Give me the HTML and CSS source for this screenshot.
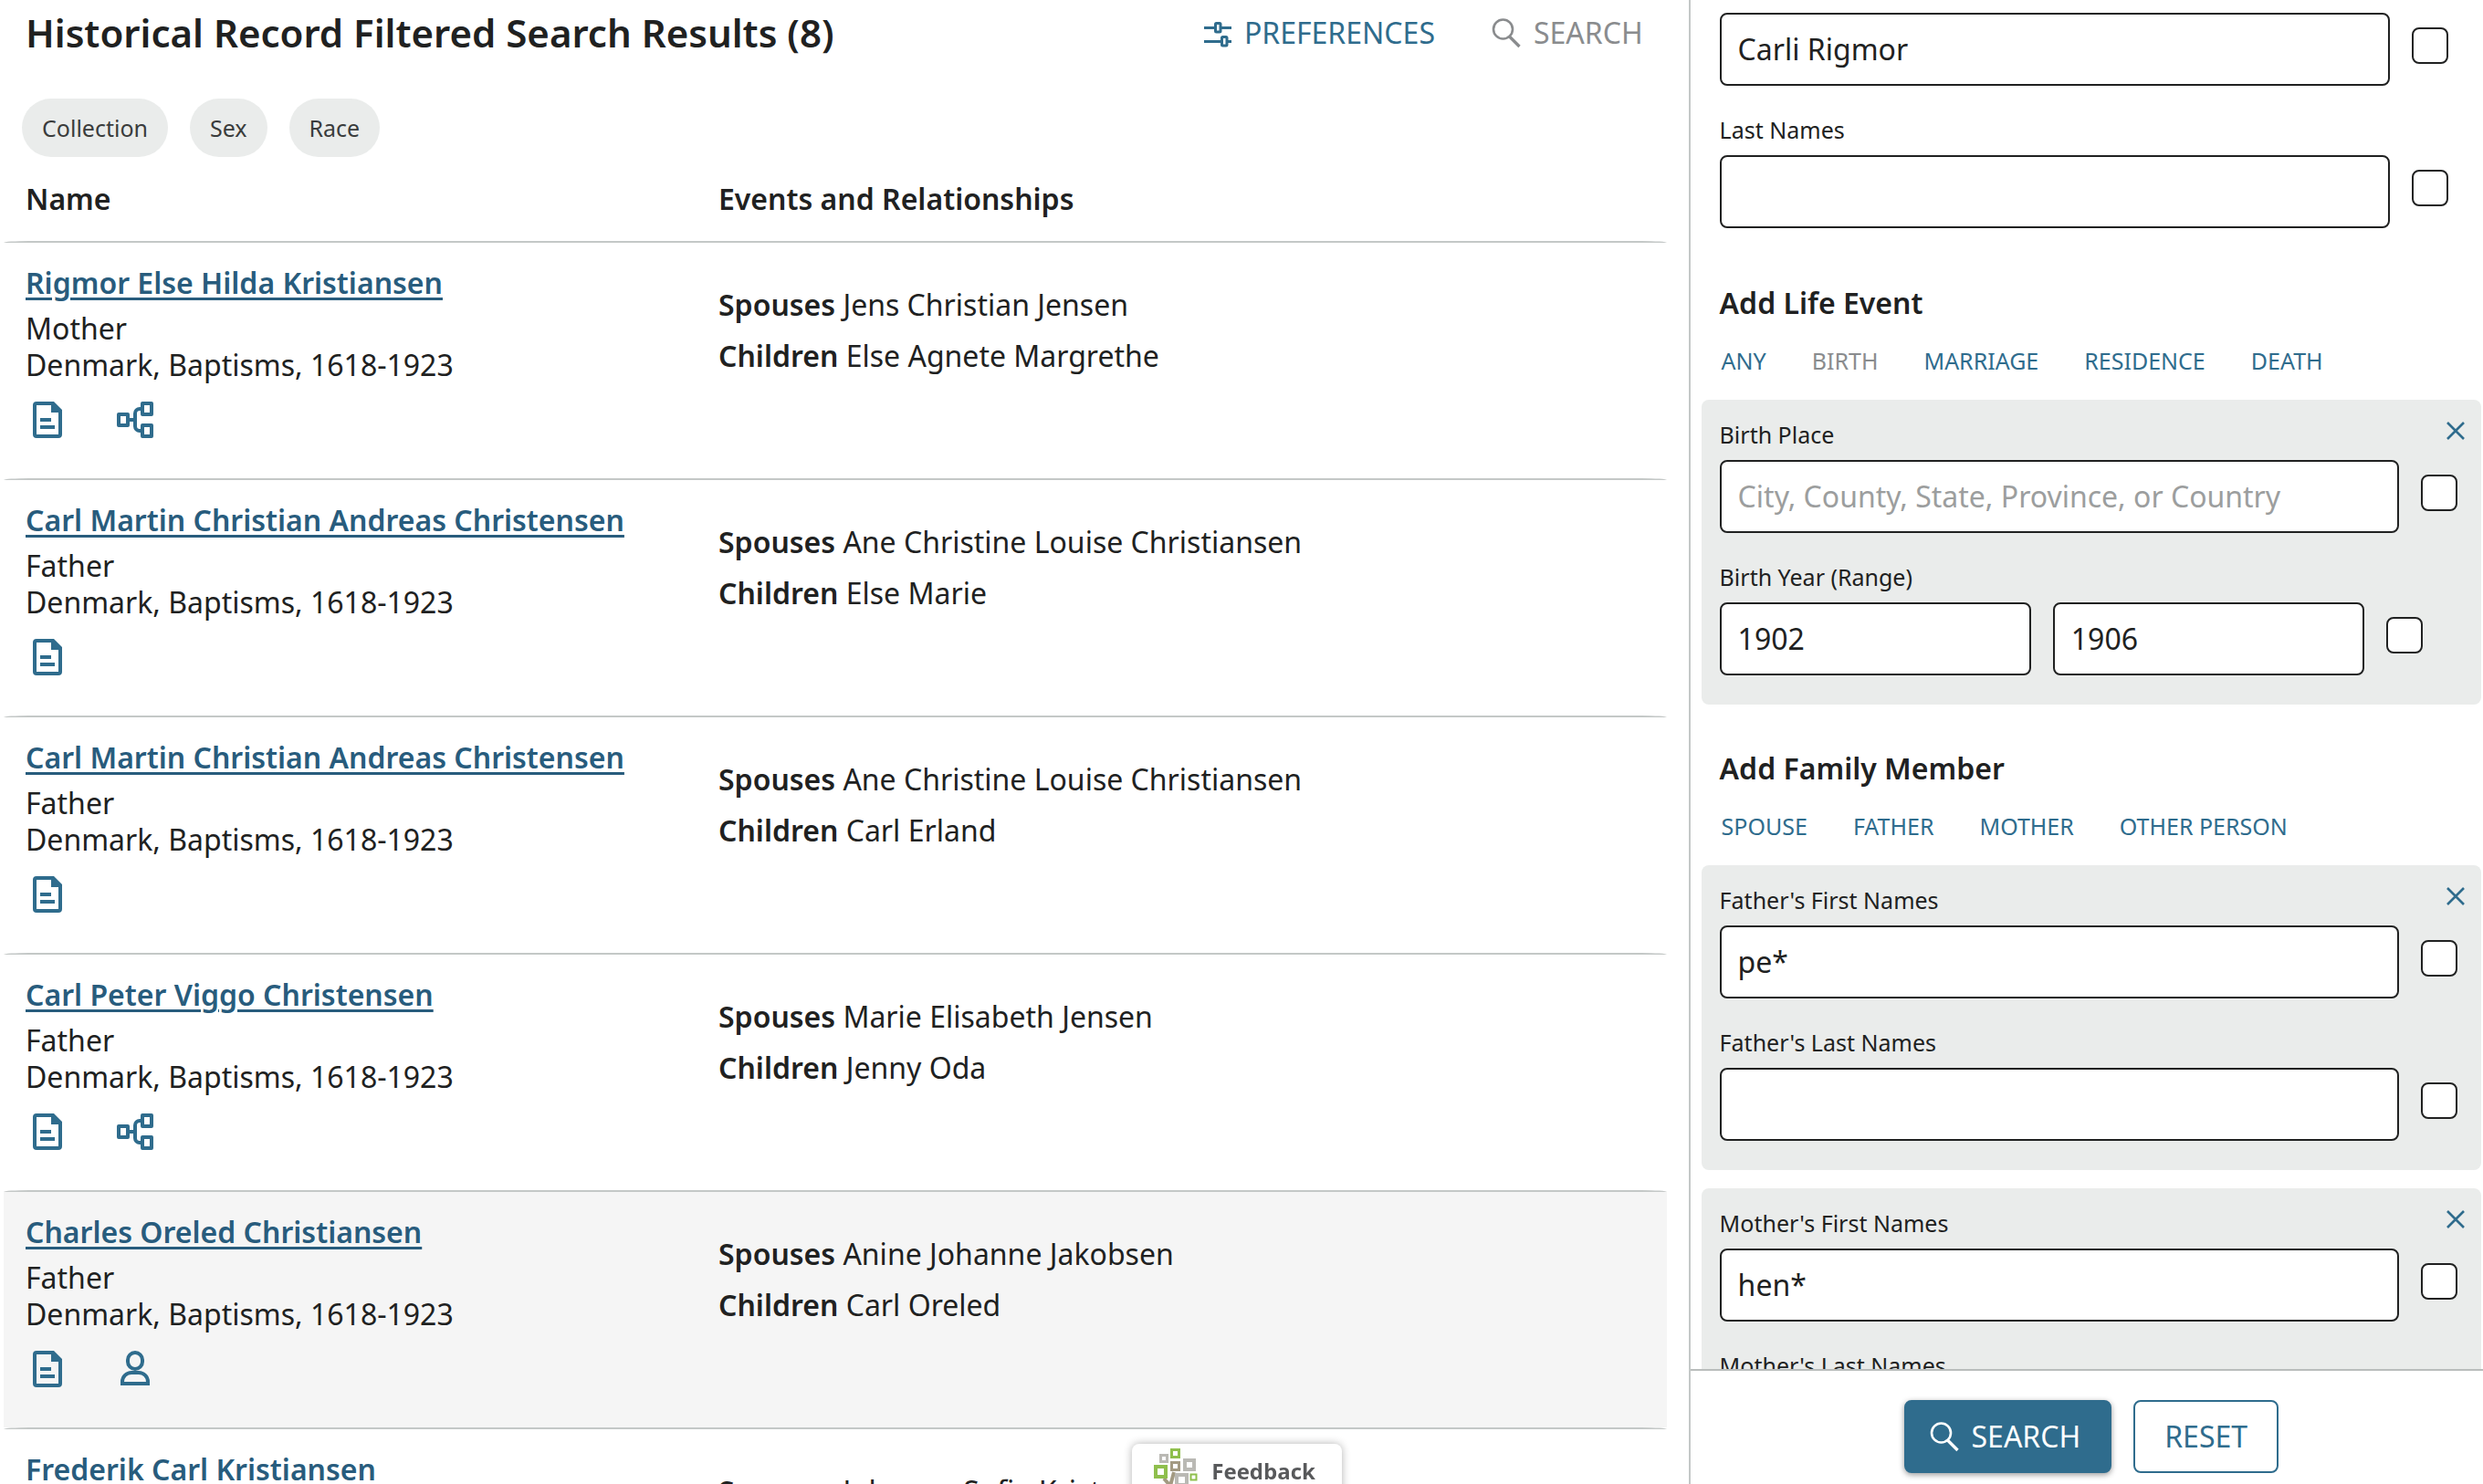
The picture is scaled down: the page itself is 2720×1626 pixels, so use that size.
FILE: index.html
```
<!DOCTYPE html>
<html lang="en">
<head>
  <meta charset="UTF-8">
  <title>Historical Record Search Results</title>
  <meta name="viewport" content="width=device-width, initial-scale=1.0">
  <link rel="stylesheet" href="styles.css">
</head>
<body>

  <!-- shared icons -->
  <svg class="sprite" aria-hidden="true">
    <symbol id="icon-search" viewBox="0 0 32 36">
      <circle cx="12.5" cy="14" r="10.5" fill="none" stroke="currentColor" stroke-width="2.6"/>
      <path d="M19.5 22 L30.5 33" fill="none" stroke="currentColor" stroke-width="3.4"/>
    </symbol>
    <symbol id="icon-doc" viewBox="0 0 32 40">
      <path d="M4 0 H23 L32 9 V36 a4 4 0 0 1 -4 4 H4 a4 4 0 0 1 -4 -4 V4 a4 4 0 0 1 4 -4z M4 4 V36 H28 V12 H20 V4z" fill="currentColor" fill-rule="evenodd"/>
      <path d="M8 20 H20 M8 28 H24" stroke="currentColor" stroke-width="4"/>
    </symbol>
    <symbol id="icon-tree" viewBox="0 0 40 40">
      <g fill="none" stroke="currentColor" stroke-width="4" stroke-linejoin="round">
        <rect x="2" y="14" width="10" height="12"/>
        <rect x="28" y="2" width="10" height="12"/>
        <rect x="28" y="26" width="10" height="12"/>
        <path d="M13 20 H20 M27 8 H25 a5 5 0 0 0 -5 5 V27 a5 5 0 0 0 5 5 H27"/>
      </g>
    </symbol>
    <symbol id="icon-person" viewBox="0 0 32 40">
      <g fill="none" stroke="currentColor" stroke-width="4">
        <rect x="8" y="2" width="16" height="18" rx="8"/>
        <path d="M2 36 V34 a10 10 0 0 1 10 -10 H20 a10 10 0 0 1 10 10 V36z"/>
      </g>
    </symbol>
    <symbol id="icon-close" viewBox="0 0 20 20">
      <path d="M1 1 L19 19 M19 1 L1 19" stroke="currentColor" stroke-width="2.6"/>
    </symbol>
  </svg>

  <div class="app">
    <main class="results">
      <header class="results-header">
        <h1>Historical Record Filtered Search Results (8)</h1>
        <div class="actions">
          <button class="action" type="button">
            <svg class="icon-sliders" viewBox="0 0 30 32" fill="none" stroke="currentColor" stroke-width="3">
              <path d="M0 10.5 H11 M19 10.5 H30 M0 25.5 H18 M26 25.5 H30"/>
              <rect x="12.500" y="5.500" width="5.500" height="9.500" rx="1"/>
              <rect x="19.500" y="20.500" width="5.500" height="9.500" rx="1"/>
            </svg>
            PREFERENCES
          </button>
          <button class="action" type="button" disabled>
            <svg class="icon-search"><use href="#icon-search"/></svg>
            SEARCH
          </button>
        </div>
      </header>

      <div class="chips">
        <button class="chip" type="button">Collection</button>
        <button class="chip" type="button">Sex</button>
        <button class="chip" type="button">Race</button>
      </div>

      <table class="records">
        <thead>
          <tr>
            <th class="col-name">Name</th>
            <th>Events and Relationships</th>
          </tr>
        </thead>
        <tbody>
          <tr>
            <td>
              <a class="name" href="#">Rigmor Else Hilda Kristiansen</a>
              <div class="detail">Mother</div>
              <div class="detail">Denmark, Baptisms, 1618-1923</div>
              <div class="icons">
                <svg class="icon"><use href="#icon-doc"/></svg>
                <svg class="icon"><use href="#icon-tree"/></svg>
              </div>
            </td>
            <td class="events">
              <div><b>Spouses</b> Jens Christian Jensen</div>
              <div><b>Children</b> Else Agnete Margrethe</div>
            </td>
          </tr>
          <tr>
            <td>
              <a class="name" href="#">Carl Martin Christian Andreas Christensen</a>
              <div class="detail">Father</div>
              <div class="detail">Denmark, Baptisms, 1618-1923</div>
              <div class="icons">
                <svg class="icon"><use href="#icon-doc"/></svg>
              </div>
            </td>
            <td class="events">
              <div><b>Spouses</b> Ane Christine Louise Christiansen</div>
              <div><b>Children</b> Else Marie</div>
            </td>
          </tr>
          <tr>
            <td>
              <a class="name" href="#">Carl Martin Christian Andreas Christensen</a>
              <div class="detail">Father</div>
              <div class="detail">Denmark, Baptisms, 1618-1923</div>
              <div class="icons">
                <svg class="icon"><use href="#icon-doc"/></svg>
              </div>
            </td>
            <td class="events">
              <div><b>Spouses</b> Ane Christine Louise Christiansen</div>
              <div><b>Children</b> Carl Erland</div>
            </td>
          </tr>
          <tr>
            <td>
              <a class="name" href="#">Carl Peter Viggo Christensen</a>
              <div class="detail">Father</div>
              <div class="detail">Denmark, Baptisms, 1618-1923</div>
              <div class="icons">
                <svg class="icon"><use href="#icon-doc"/></svg>
                <svg class="icon"><use href="#icon-tree"/></svg>
              </div>
            </td>
            <td class="events">
              <div><b>Spouses</b> Marie Elisabeth Jensen</div>
              <div><b>Children</b> Jenny Oda</div>
            </td>
          </tr>
          <tr class="active">
            <td>
              <a class="name" href="#">Charles Oreled Christiansen</a>
              <div class="detail">Father</div>
              <div class="detail">Denmark, Baptisms, 1618-1923</div>
              <div class="icons">
                <svg class="icon"><use href="#icon-doc"/></svg>
                <svg class="icon"><use href="#icon-person"/></svg>
              </div>
            </td>
            <td class="events">
              <div><b>Spouses</b> Anine Johanne Jakobsen</div>
              <div><b>Children</b> Carl Oreled</div>
            </td>
          </tr>
          <tr>
            <td>
              <a class="name" href="#">Frederik Carl Kristiansen</a>
            </td>
            <td class="events">
              <div><b>Spouses</b> Johanne Sofie Kristensen</div>
            </td>
          </tr>
        </tbody>
      </table>
    </main>

    <aside class="sidebar">
      <form class="form">
        <div class="group">
          <div class="row">
            <input class="text" type="text" value="Carli Rigmor" aria-label="First Names">
            <input class="check" type="checkbox" aria-label="Exact first names">
          </div>
          <label for="last">Last Names</label>
          <div class="row">
            <input class="text" type="text" id="last">
            <input class="check" type="checkbox" aria-label="Exact last names">
          </div>
        </div>

        <h2>Add Life Event</h2>
        <div class="tabs">
          <button type="button">ANY</button>
          <button type="button" disabled>BIRTH</button>
          <button type="button">MARRIAGE</button>
          <button type="button">RESIDENCE</button>
          <button type="button">DEATH</button>
        </div>
        <div class="card">
          <button class="close" type="button" aria-label="Remove birth"><svg><use href="#icon-close"/></svg></button>
          <label for="place">Birth Place</label>
          <div class="row">
            <input class="text" type="text" id="place" placeholder="City, County, State, Province, or Country">
            <input class="check" type="checkbox" aria-label="Exact birth place">
          </div>
          <label for="from">Birth Year (Range)</label>
          <div class="row range">
            <input class="text" type="text" id="from" value="1902">
            <input class="text" type="text" value="1906" aria-label="Birth year to">
            <input class="check" type="checkbox" aria-label="Exact birth year">
          </div>
        </div>

        <h2>Add Family Member</h2>
        <div class="tabs">
          <button type="button">SPOUSE</button>
          <button type="button">FATHER</button>
          <button type="button">MOTHER</button>
          <button type="button">OTHER PERSON</button>
        </div>
        <div class="card">
          <button class="close" type="button" aria-label="Remove father"><svg><use href="#icon-close"/></svg></button>
          <label for="father-first">Father's First Names</label>
          <div class="row">
            <input class="text" type="text" id="father-first" value="pe*">
            <input class="check" type="checkbox" aria-label="Exact father's first names">
          </div>
          <label for="father-last">Father's Last Names</label>
          <div class="row">
            <input class="text" type="text" id="father-last">
            <input class="check" type="checkbox" aria-label="Exact father's last names">
          </div>
        </div>
        <div class="card">
          <button class="close" type="button" aria-label="Remove mother"><svg><use href="#icon-close"/></svg></button>
          <label for="mother-first">Mother's First Names</label>
          <div class="row">
            <input class="text" type="text" id="mother-first" value="hen*">
            <input class="check" type="checkbox" aria-label="Exact mother's first names">
          </div>
          <label for="mother-last">Mother's Last Names</label>
          <div class="row">
            <input class="text" type="text" id="mother-last">
            <input class="check" type="checkbox" aria-label="Exact mother's last names">
          </div>
        </div>
      </form>
      <footer class="form-footer">
        <button class="btn primary" type="button">
          <svg class="icon-search"><use href="#icon-search"/></svg>
          SEARCH
        </button>
        <button class="btn" type="button">RESET</button>
      </footer>
    </aside>
  </div>

  <button class="feedback" type="button">
    <svg class="logo" viewBox="0 0 48 52" fill="none">
      <path d="M11 34 L18 42 V52 M22 27 L18 42" stroke="#a39a82" stroke-width="4"/>
      <g stroke="#bab9b4" stroke-width="3">
        <rect x="7.500" y="8.500" width="7" height="7"/>
        <rect x="34" y="14" width="10" height="10" stroke-width="4"/>
        <rect x="25" y="30" width="11" height="11" stroke-width="4"/>
      </g>
      <rect x="19.500" y="16.500" width="8" height="8" stroke="#a39a82" stroke-width="3"/>
      <g stroke="#8fbf4d" stroke-width="3">
        <rect x="19.500" y="2.500" width="8" height="8"/>
        <rect x="2" y="21" width="11" height="11" stroke-width="4"/>
        <rect x="40.500" y="29.500" width="6" height="6" stroke-width="2"/>
      </g>
    </svg>
    Feedback
  </button>

</body>
</html>
```
FILE: styles.css
```
* {
  box-sizing: border-box;
}

body {
  margin: 0;
  font-family: "Noto Sans", sans-serif;
  font-size: 32px;
  line-height: 40px;
  color: #202121;
  background: white;
}

button,
input {
  font: inherit;
  color: inherit;
  margin: 0;
}

button {
  padding: 0;
  border: none;
  background: none;
  cursor: pointer;
}

h1,
h2 {
  margin: 0;
  font-weight: 600;
}

.sprite {
  display: none;
}

.app {
  display: flex;
  height: 100vh;
  overflow: hidden;
}

/* results */
.results {
  flex: 1;
  min-width: 0;
  padding: 12px 24px 0 4px;
}

.results-header {
  display: flex;
  justify-content: space-between;
  align-items: center;
  padding: 0 26px 0 24px;
}

h1 {
  font-size: 42px;
  line-height: 48px;
}

.actions {
  display: flex;
  gap: 62px;
}

.action {
  display: flex;
  align-items: center;
  gap: 14px;
  color: #2f6c8d;
}

.action:disabled {
  color: #8a8c8e;
}

.icon-sliders {
  width: 30px;
  height: 32px;
}

.icon-search {
  width: 32px;
  height: 36px;
}

.chips {
  display: flex;
  gap: 24px;
  padding: 48px 20px 0;
}

.chip {
  height: 64px;
  padding: 0 22px;
  border-radius: 32px;
  background: #eaeceb;
  color: #3a3c3c;
  font-size: 25px;
}

.records {
  width: 100%;
  table-layout: fixed;
  border-spacing: 0;
}

.col-name {
  width: 41.6667%;
}

th {
  height: 92px;
  padding: 0 24px;
  text-align: left;
  font-weight: 600;
}

td {
  height: 260px;
  padding: 20px 24px 0;
  vertical-align: top;
  border-top: 2px solid #c4c8c7;
}

td:first-child {
  border-top-left-radius: 28px 2px;
}

td:last-child {
  border-top-right-radius: 28px 2px;
}

.active td {
  background: #f5f5f5;
}

.name {
  display: block;
  width: fit-content;
  line-height: 48px;
  margin-bottom: 6px;
  font-weight: 600;
  color: #285c7d;
  text-underline-offset: 4px;
  text-decoration-thickness: 3px;
}

.icons {
  display: flex;
  gap: 56px;
  margin-top: 20px;
  padding-left: 4px;
  color: #2f6c8d;
}

.icon {
  width: 40px;
  height: 40px;
}

td.events {
  padding-top: 40px;
  line-height: 56px;
}

.events b {
  font-weight: 600;
}

/* search form */
.sidebar {
  display: flex;
  flex-direction: column;
  width: 32%;
  border-left: 2px solid #c4c8c7;
}

.form {
  flex: 1;
  min-height: 0;
  overflow: hidden;
  padding: 14px 2px 0 12px;
}

.group {
  padding: 0 36px 0 20px;
}

.row {
  display: flex;
  gap: 24px;
  margin-bottom: 32px;
}

.text {
  flex: 1;
  min-width: 0;
  height: 80px;
  padding: 0 18px 2px;
  border: 2px solid #202121;
  border-radius: 8px;
  background: white;
}

.text::placeholder {
  color: #9c9e9e;
}

.check {
  appearance: none;
  flex: none;
  width: 40px;
  height: 40px;
  margin-top: 16px;
  border: 2px solid #202121;
  border-radius: 8px;
  background: white;
}

label {
  display: block;
  width: fit-content;
  padding-bottom: 12px;
  font-size: 25px;
  line-height: 32px;
}

h2 {
  padding: 30px 20px 0;
  font-size: 32px;
}

.tabs {
  display: flex;
  gap: 50px;
  padding: 24px 22px;
  font-size: 25px;
  line-height: 38px;
}

.tabs button {
  color: #2f6c8d;
}

.tabs button:disabled {
  color: #8a8c8e;
}

.card {
  display: flow-root;
  position: relative;
  margin-bottom: 20px;
  padding: 22px 26px 0 20px;
  border-radius: 8px;
  background: #eaeceb;
}

.range {
  padding-right: 38px;
}

.close {
  position: absolute;
  top: 24px;
  right: 18px;
  width: 20px;
  height: 20px;
  color: #2f6c8d;
}

.close svg {
  display: block;
  width: 100%;
  height: 100%;
}

.form-footer {
  display: flex;
  justify-content: center;
  gap: 24px;
  padding: 32px 2px 12px 12px;
  border-top: 2px solid #b9bdbc;
  background: white;
}

.btn {
  display: flex;
  align-items: center;
  gap: 14px;
  height: 80px;
  padding: 0 32px;
  border: 2px solid #2f6c8d;
  border-radius: 8px;
  color: #2f6c8d;
}

.primary {
  padding: 0 32px 0 26px;
  background: #2f6c8d;
  color: white;
  box-shadow: 0 2px 6px rgba(0, 0, 0, 0.4);
}

.feedback {
  position: fixed;
  left: 45.6%;
  bottom: -16px;
  display: flex;
  align-items: center;
  gap: 15px;
  width: 230px;
  height: 60px;
  padding-left: 24px;
  border-radius: 8px;
  background: white;
  box-shadow: 0 0 10px rgba(0, 0, 0, 0.3);
  color: #58595b;
  font-family: "Open Sans", sans-serif;
  font-size: 24px;
  font-weight: 700;
}

.logo {
  width: 48px;
  height: 52px;
}
```
